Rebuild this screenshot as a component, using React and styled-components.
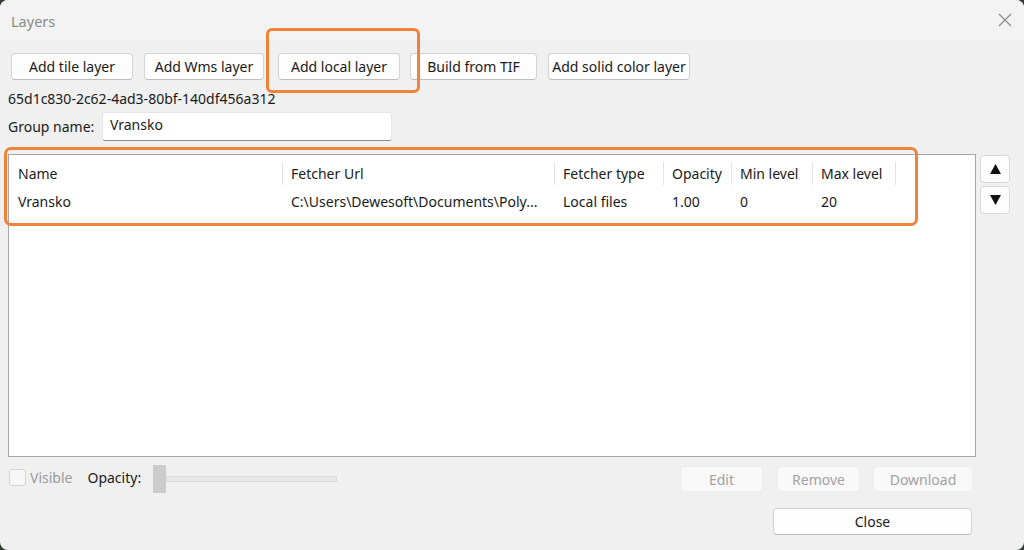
import React from 'react'
import styled, { createGlobalStyle } from 'styled-components'

const Global = createGlobalStyle`
  html, body { margin: 0; padding: 0; }
  body {
    background: #2f3d33;
    font-family: "Noto Sans", "Open Sans", sans-serif;
    font-size: 14px;
    color: #1a1a1a;
  }
`

const Window = styled.div`
  width: 1024px;
  height: 550px;
  background: #f0f0f0;
  border-radius: 8px;
  overflow: hidden;
  display: flex;
  flex-direction: column;
`

const TitleBar = styled.div`
  height: 40px;
  background: #f3f3f3;
  display: flex;
  align-items: center;
  justify-content: space-between;
  padding: 0 11px 0 11px;
  box-sizing: border-box;
`

const Title = styled.span`
  color: #8a8a8a;
  font-size: 14.5px;
  margin-top: 1px;
`

const CloseX = styled.svg`
  width: 14px;
  height: 14px;
  margin-right: 1px;
`

const Body = styled.div`
  flex: 1;
  display: flex;
  flex-direction: column;
  padding: 13px 8px 0 8px;
`

const Toolbar = styled.div`
  display: flex;
  padding-left: 3px;
`

const Btn = styled.button`
  height: ${p => p.$h || 27}px;
  padding: 0;
  margin-right: ${p => p.$gap || 0}px;
  background: ${p => (p.disabled ? '#f9f9f9' : '#fdfdfd')};
  border: 1px solid ${p => (p.disabled ? '#ededed' : '#d3d3d3')};
  border-bottom-color: ${p => (p.disabled ? '#ededed' : '#bcbcbc')};
  border-radius: 4px;
  font-family: inherit;
  font-size: 14px;
  color: ${p => (p.disabled ? '#a2a2a2' : '#1a1a1a')};
  width: ${p => p.$w}px;
  box-sizing: border-box;
  white-space: nowrap;
`

const Marked = styled.span`
  position: relative;
  display: inline-flex;
  margin-right: 10px;
  &::after {
    content: '';
    position: absolute;
    left: -12px;
    right: -20px;
    top: -25px;
    bottom: -13px;
    border: 3px solid #f0823a;
    border-radius: 6px;
    pointer-events: none;
  }
`

const Guid = styled.div`
  margin-top: 11px;
  height: 16px;
  line-height: 16px;
`

const GroupRow = styled.div`
  display: flex;
  align-items: center;
  margin-top: 5px;
`

const GroupLabel = styled.span`
  width: 94px;
`

const Input = styled.div`
  width: 290px;
  height: 29px;
  box-sizing: border-box;
  background: #ffffff;
  border: 1px solid #e6e6e6;
  border-bottom: 1px solid #8c8c8c;
  border-radius: 3px;
  padding: 3px 0 0 7px;
  line-height: 18px;
`

const TableArea = styled.div`
  display: flex;
  gap: 4px;
  margin-top: 13px;
`

const Table = styled.div`
  position: relative;
  width: 968px;
  height: 303px;
  box-sizing: border-box;
  background: #ffffff;
  border: 1px solid #a6a6a6;
  padding-top: 4px;
`

const Highlight = styled.div`
  position: absolute;
  left: -5px;
  top: -8px;
  width: 914px;
  height: 79px;
  border: 3px solid #f0823a;
  border-radius: 7px;
  box-sizing: border-box;
  pointer-events: none;
`

const Row = styled.div`
  display: grid;
  grid-template-columns: 274px 272px 109px 68px 81px 83px;
  height: 28px;
`

const Cell = styled.div`
  position: relative;
  padding-left: ${p => (p.$first ? 9 : 8)}px;
  display: flex;
  align-items: center;
  white-space: nowrap;
  overflow: hidden;
  &::after {
    content: '';
    display: ${p => (p.$head ? 'block' : 'none')};
    position: absolute;
    right: 0;
    top: 3px;
    bottom: 2px;
    width: 1px;
    background: #e5e5e5;
  }
`

const Arrows = styled.div`
  display: flex;
  flex-direction: column;
  gap: 3px;
  padding-top: 1px;
`

const ArrowBtn = styled.button`
  width: 30px;
  height: 28px;
  background: #fdfdfd;
  border: 1px solid #d9d9d9;
  border-radius: 4px;
  display: flex;
  align-items: center;
  justify-content: center;
  padding: 0;
`

const Bottom = styled.div`
  display: flex;
  align-items: center;
  margin-top: 8px;
  height: 28px;
`

const Check = styled.span`
  width: 17px;
  height: 17px;
  box-sizing: border-box;
  border: 1px solid #d5d5d5;
  border-radius: 3px;
  background: #f7f7f7;
  margin-left: 1px;
  margin-top: -3px;
`

const Label = styled.span`
  color: ${p => (p.$muted ? '#9a9a9a' : '#1a1a1a')};
  margin-left: ${p => p.$ml || 0}px;
  margin-top: -3px;
`

const Slider = styled.div`
  display: flex;
  align-items: center;
  margin-left: 12px;
`

const Handle = styled.span`
  width: 13px;
  height: 28px;
  background: #cccccc;
`

const Track = styled.span`
  width: 169px;
  height: 4px;
  background: #e8e8e8;
  border: 1px solid #dcdcdc;
`

const Actions = styled.div`
  margin-left: auto;
  display: flex;
  margin-right: 43px;
`

const Footer = styled.div`
  display: flex;
  justify-content: flex-end;
  margin-top: 15px;
  padding-right: 44px;
`

const columns = ['Name', 'Fetcher Url', 'Fetcher type', 'Opacity', 'Min level', 'Max level']
const layer = ['Vransko', 'C:\\Users\\Dewesoft\\Documents\\Poly...', 'Local files', '1.00', '0', '20']

export default function App() {
  return (
    <>
      <Global />
      <Window>
        <TitleBar>
          <Title>Layers</Title>
          <CloseX viewBox="0 0 14 14">
            <path d="M1 1 L13 13 M13 1 L1 13" stroke="#8a8a8a" strokeWidth="1.2" fill="none" />
          </CloseX>
        </TitleBar>
        <Body>
          <Toolbar>
            <Btn $w={122} $gap={11}>Add tile layer</Btn>
            <Btn $w={120} $gap={14}>Add Wms layer</Btn>
            <Marked>
              <Btn $w={122}>Add local layer</Btn>
            </Marked>
            <Btn $w={127} $gap={11}>Build from TIF</Btn>
            <Btn $w={142}>Add solid color layer</Btn>
          </Toolbar>
          <Guid>65d1c830-2c62-4ad3-80bf-140df456a312</Guid>
          <GroupRow>
            <GroupLabel>Group name:</GroupLabel>
            <Input>Vransko</Input>
          </GroupRow>
          <TableArea>
            <Table>
              <Highlight />
              <Row>
                {columns.map((c, i) => (
                  <Cell key={c} $head $first={i === 0}>{c}</Cell>
                ))}
              </Row>
              <Row>
                {layer.map((c, i) => (
                  <Cell key={i} $first={i === 0}>{c}</Cell>
                ))}
              </Row>
            </Table>
            <Arrows>
              <ArrowBtn>
                <svg width="11" height="10" viewBox="0 0 11 10"><path d="M5.5 0 L11 10 L0 10 Z" fill="#111" /></svg>
              </ArrowBtn>
              <ArrowBtn>
                <svg width="11" height="10" viewBox="0 0 11 10"><path d="M0 0 L11 0 L5.5 10 Z" fill="#111" /></svg>
              </ArrowBtn>
            </Arrows>
          </TableArea>
          <Bottom>
            <Check />
            <Label $muted $ml={4}>Visible</Label>
            <Label $ml={15}>Opacity:</Label>
            <Slider>
              <Handle />
              <Track />
            </Slider>
            <Actions>
              <Btn disabled $h={26} $w={83} $gap={14}>Edit</Btn>
              <Btn disabled $h={26} $w={83} $gap={13}>Remove</Btn>
              <Btn disabled $h={26} $w={100}>Download</Btn>
            </Actions>
          </Bottom>
          <Footer>
            <Btn $w={199}>Close</Btn>
          </Footer>
        </Body>
      </Window>
    </>
  )
}
